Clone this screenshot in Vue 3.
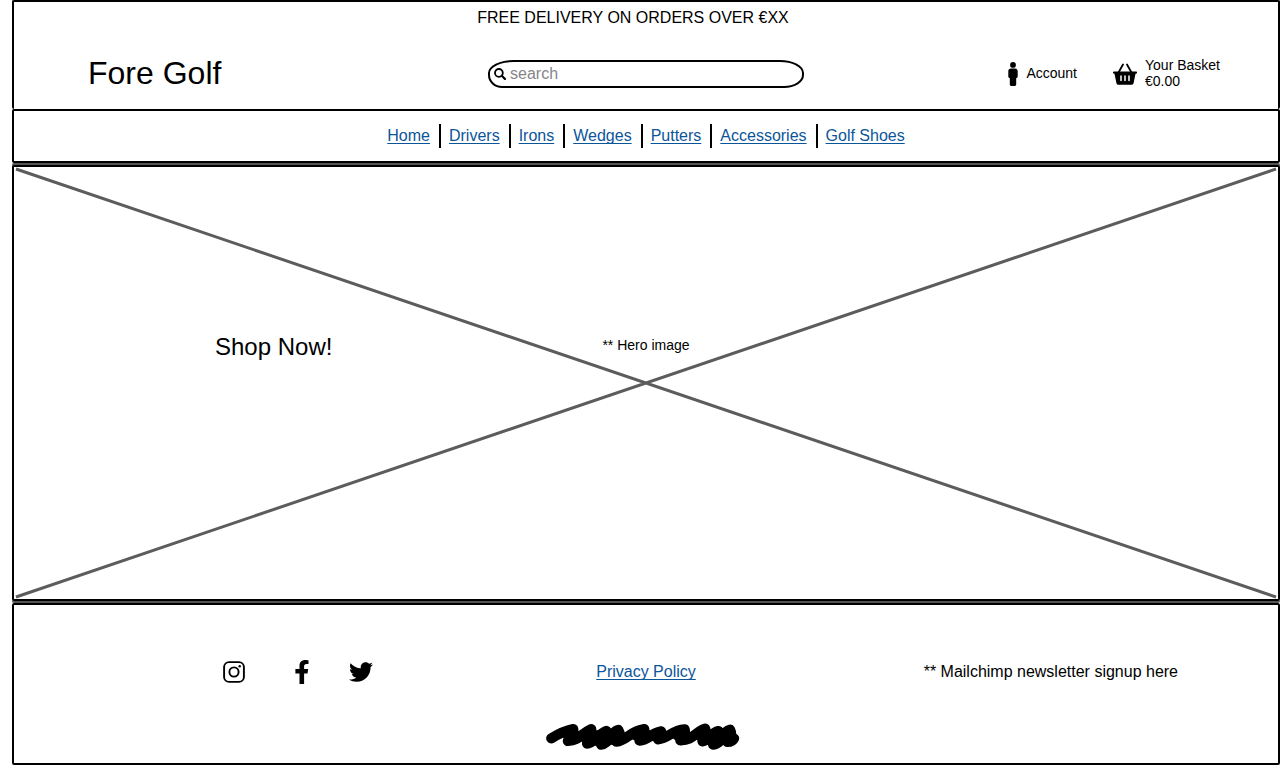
<script setup>
import { ref } from 'vue'

const query = ref('')
const categories = ['Home', 'Drivers', 'Irons', 'Wedges', 'Putters', 'Accessories', 'Golf Shoes']
</script>

<template>
  <div class="page">
    <header class="header">
      <p class="announcement">FREE DELIVERY ON ORDERS OVER €XX</p>
      <div class="header-row">
        <h1 class="logo">Fore Golf</h1>
        <form class="search" role="search" @submit.prevent>
          <svg class="search-icon" viewBox="0 0 12 12" aria-hidden="true">
            <circle cx="4.9" cy="4.9" r="3.9" fill="none" stroke="#000" stroke-width="1.8" />
            <path d="M7.8 7.8 11 11" stroke="#000" stroke-width="2.2" stroke-linecap="round" />
          </svg>
          <input v-model="query" class="search-input" type="search" placeholder="search" aria-label="search" />
        </form>
        <div class="tools">
          <a class="tool" href="#account">
            <svg class="person" viewBox="0 0 10 24" aria-hidden="true">
              <circle cx="5" cy="2.9" r="2.9" />
              <path d="M3 6.6h4c1.6 0 2.7 1.1 2.7 2.7v5.2c0 .9-.6 1.5-1.5 1.5V22.600c0 .8-.6 1.400-1.400 1.400H3.200c-.8 0-1.400-.6-1.400-1.400V16C.9 16 .3 15.400.3 14.500V9.300C.3 7.700 1.400 6.600 3 6.600z" />
            </svg>
            <span class="tool-text">Account</span>
          </a>
          <a class="tool" href="#basket">
            <svg class="basket" viewBox="0 0 24 22" aria-hidden="true">
              <path d="M5.500 9.500 10 1.500M18.500 9.500 14 1.500" fill="none" stroke="#000" stroke-width="1.800" stroke-linecap="round" />
              <path d="M1 8.500h22c.6 0 1 .4 1 .9v.4c0 .5-.4.9-1 .9h-.5l-1.900 9.300c-.2 1-1 1.800-2.100 1.800h-13c-1.100 0-1.900-.8-2.100-1.800L1.500 10.700H1c-.6 0-1-.4-1-.9v-.4c0-.5.4-.9 1-.9z" />
              <path d="M8 13v4.600M12 13v4.600M16 13v4.600" stroke="#fff" stroke-width="1.500" stroke-linecap="round" />
            </svg>
            <span class="tool-text">Your Basket<br />€0.00</span>
          </a>
        </div>
      </div>
    </header>

    <nav class="nav" aria-label="Categories">
      <ul class="nav-list">
        <li v-for="name in categories" :key="name" class="nav-item">
          <a class="link" href="#">{{ name }}</a>
        </li>
      </ul>
    </nav>

    <main class="hero">
      <svg class="cross" viewBox="0 0 100 100" preserveAspectRatio="none" aria-hidden="true">
        <path d="M0 0 100 100M0 100 100 0" />
      </svg>
      <button class="shop" type="button">Shop Now!</button>
      <p class="hero-note">** Hero image</p>
    </main>

    <footer class="footer">
      <div class="footer-row">
        <div class="social">
          <a href="#instagram" aria-label="Instagram">
            <svg width="22" height="22" viewBox="0 0 22 22" fill="none" stroke="#000">
              <rect x="1.100" y="1.100" width="19.800" height="19.800" rx="5" stroke-width="1.900" />
              <circle cx="11" cy="11" r="4.600" stroke-width="1.900" />
              <circle cx="16.700" cy="5.300" r="1.200" fill="#000" stroke="none" />
            </svg>
          </a>
          <a class="facebook" href="#facebook" aria-label="Facebook">
            <svg width="14" height="24" viewBox="0 0 14 24">
              <path d="M12.500 13.400 13.200 9H9.100V6.200c0-1.200.6-2.300 2.400-2.300h2V.3S11.800 0 10.300 0C6.800 0 4.500 2.100 4.500 5.700V9H.4v4.400h4.100V24h4.600V13.400z" />
            </svg>
          </a>
          <a class="twitter" href="#twitter" aria-label="Twitter">
            <svg width="24" height="24" viewBox="0 0 512 512">
              <path d="M459.400 151.700c.3 4.500.3 9.100.3 13.600 0 138.700-105.600 298.600-298.600 298.600-59.500 0-114.700-17.200-161.100-47.100 8.400 1 16.600 1.300 25.300 1.300 49.100 0 94.200-16.600 130.300-44.800-46.100-1-84.800-31.200-98.100-72.800 6.500 1 13 1.600 19.800 1.600 9.400 0 18.800-1.300 27.600-3.600-48.100-9.700-84.100-52-84.100-103v-1.300c14 7.800 30.200 12.700 47.400 13.300-28.300-18.800-46.800-51-46.800-87.400 0-19.500 5.200-37.400 14.300-53 51.700 63.700 129.300 105.300 216.400 109.800-1.600-7.800-2.600-15.900-2.600-24 0-57.800 46.800-104.900 104.900-104.900 30.200 0 57.500 12.700 76.700 33.100 23.700-4.500 46.500-13.300 66.600-25.300-7.800 24.400-24.400 44.800-46.100 57.800 21.100-2.300 41.600-8.100 60.400-16.200-14.300 20.800-32.200 39.300-52.600 54.300z" />
            </svg>
          </a>
        </div>
        <a class="link" href="#privacy">Privacy Policy</a>
        <p class="newsletter">** Mailchimp newsletter signup here</p>
      </div>
      <svg class="scribble" viewBox="48 219 585 81" aria-hidden="true">
        <path d="M64 265Q100 243 130 237Q133 250 114 273C150 271 152 252 184 237Q188 256 172 281C190 281 204 254 230 243Q226 262 214 284C240 282 238 248 266 240Q276 256 260 275C292 272 302 242 344 237Q348 250 330 272C358 270 368 248 395 244Q396 256 386 268C418 266 426 240 466 238Q470 254 453 271C492 272 496 246 528 236Q534 252 520 274C540 272 546 248 568 243Q566 264 552 284C584 280 574 246 603 239Q612 258 595 276Q610 276 615 265" />
        <path d="M112 254 134 258M168 266 200 256 262 254M190 272 262 268M318 256 348 250 336 262M376 258 400 260M444 256 470 256M512 258 600 254M530 270 606 266" />
      </svg>
    </footer>
  </div>
</template>

<style>
body {
  margin: 0;
  background: #fff;
}
</style>

<style scoped>
* {
  box-sizing: border-box;
}

.page {
  display: flex;
  flex-direction: column;
  min-height: 100vh;
  padding: 0 3px 7px 12px;
  font: 16px/24px "Liberation Sans", Arial, sans-serif;
  color: #000;
}

p,
h1,
ul {
  margin: 0;
  padding: 0;
}

.header,
.nav,
.hero,
.footer {
  border: 2px solid #000;
  border-radius: 2px;
}

.header {
  padding: 4px 0 18px;
  border-bottom: 0;
}

.announcement {
  padding-right: 26px;
  text-align: center;
}

.header-row {
  display: grid;
  grid-template-columns: 1fr minmax(0, 316px) 1fr;
  align-items: center;
  margin-top: 27px;
}

.logo {
  padding: 0 0 2px 74px;
  font-size: 32px;
  font-weight: 400;
  line-height: 32px;
}

.search {
  display: flex;
  align-items: center;
  gap: 4px;
  height: 28px;
  padding: 0 16px 0 4px;
  border: 2px solid #000;
  border-radius: 26px 24px 20px 14px / 13px;
}

.search-icon {
  flex: none;
  width: 12px;
  height: 12px;
}

.search-input {
  flex: 1;
  min-width: 0;
  padding: 0;
  border: 0;
  outline: 0;
  background: none;
  font: inherit;
  appearance: none;
}

.search-input::placeholder {
  color: #85858a;
  opacity: 1;
}

.tools {
  display: flex;
  justify-content: flex-end;
  align-items: center;
  gap: 36px;
  padding-right: 58px;
}

.tool {
  display: flex;
  align-items: center;
  gap: 8px;
  font-size: 14px;
  line-height: 16px;
  color: #000;
  text-decoration: none;
  white-space: nowrap;
}

.tool-text {
  padding-bottom: 2px;
}

.person {
  width: 10px;
  height: 24px;
}

.basket {
  width: 24px;
  height: 22px;
}

.nav {
  padding: 13px 0;
}

.nav-list {
  display: flex;
  justify-content: center;
  list-style: none;
}

.nav-item + .nav-item {
  margin-left: 9px;
  padding-left: 8px;
  border-left: 2px solid #000;
}

.link {
  color: #0b5599;
  text-decoration: underline 1px;
  text-underline-offset: 2px;
  text-decoration-skip-ink: none;
}

.hero {
  position: relative;
  flex: 1;
  display: grid;
  grid-template-columns: 1fr auto 1fr;
  align-items: start;
  min-height: 320px;
  margin: 2px 0;
  padding-top: 166px;
  box-shadow: 0 2px #555, 0 -2px #555;
}

.cross {
  position: absolute;
  inset: 2px;
  width: calc(100% - 4px);
  height: calc(100% - 4px);
  overflow: visible;
}

.cross path {
  fill: none;
  stroke: #5c5c5c;
  stroke-width: 3px;
  vector-effect: non-scaling-stroke;
}

.shop {
  position: relative;
  justify-self: start;
  margin-left: 201px;
  padding: 0;
  border: 0;
  background: none;
  font: inherit;
  font-size: 24px;
  line-height: 28px;
  color: #000;
}

.hero-note {
  position: relative;
  font-size: 14px;
}

.footer {
  padding: 55px 0 13px;
}

.footer-row {
  display: grid;
  grid-template-columns: 1fr auto 1fr;
  align-items: center;
}

.social {
  display: flex;
  align-items: center;
  padding-left: 209px;
}

.social a {
  display: flex;
}

.facebook {
  margin-left: 50px;
}

.twitter {
  margin-left: 40px;
}

.newsletter {
  justify-self: end;
  padding-right: 100px;
}

.scribble {
  display: block;
  width: 200px;
  height: 27px;
  margin: 39px auto 0;
  padding-right: 6px;
}

.scribble path {
  fill: none;
  stroke: #000;
  stroke-width: 31;
  stroke-linecap: round;
  stroke-linejoin: round;
}
</style>
